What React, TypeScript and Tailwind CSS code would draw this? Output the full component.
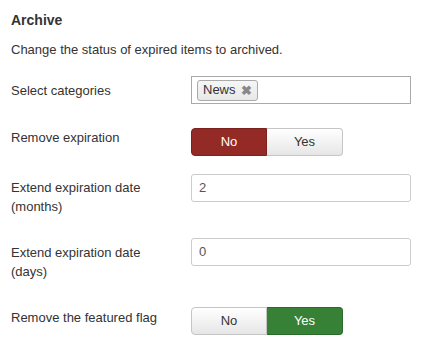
import React from 'react';

const Toggle = ({ value }: { value: 'no' | 'yes' }) => {
  const base = 'w-[76px] h-[28px] flex items-center justify-center text-[13px] border';
  const off = 'bg-gradient-to-b from-white to-[#e6e6e6] text-[#333] border-[#c5c5c5]';
  return (
    <div className="flex">
      <div
        className={`${base} rounded-l-[4px] ${
          value === 'no' ? 'bg-[#942a25] text-white border-[#7a221e]' : off
        }`}
      >
        No
      </div>
      <div
        className={`${base} w-[75px] rounded-r-[4px] border-l-0 ${
          value === 'yes' ? 'bg-[#378137] text-white border-[#2c6a2c]' : off
        }`}
      >
        Yes
      </div>
    </div>
  );
};

const Label = ({ children, pt }: { children: React.ReactNode; pt: string }) => (
  <div className={`w-[180px] shrink-0 text-[13px] leading-[19px] text-[#333] ${pt}`}>{children}</div>
);

export default function App() {
  return (
    <div
      className="w-[437px] h-[356px] bg-white pt-[10px] pl-[11px] text-[#333]"
      style={{ fontFamily: '"Liberation Sans", Arial, sans-serif' }}
    >
      <h3 className="text-[14px] font-bold leading-[20px]">Archive</h3>
      <p className="mt-[11px] text-[13px] leading-[18px]">Change the status of expired items to archived.</p>

      <div className="mt-[17px] flex items-start">
        <Label pt="pt-[5px]">Select categories</Label>
        <div className="w-[220px] h-[28px] border border-[#aaa] bg-white flex items-center pl-[5px]">
          <span className="h-[21px] flex items-center gap-[5px] px-[5px] border border-[#aaa] rounded-[3px] bg-gradient-to-b from-[#f6f6f6] to-[#e8e8e8] text-[13px] text-[#333]">
            News
            <span className="text-[#888] text-[13px] font-bold leading-none">✖</span>
          </span>
        </div>
      </div>

      <div className="mt-[24px] flex items-start">
        <Label pt="pt-0">Remove expiration</Label>
        <Toggle value="no" />
      </div>

      <div className="mt-[18px] flex items-start">
        <Label pt="pt-[4px]">
          Extend expiration date
          <br />
          (months)
        </Label>
        <div className="w-[220px] h-[28px] border border-[#ccc] rounded-[3px] flex items-center pl-[7px] text-[13px] text-[#555]">
          2
        </div>
      </div>

      <div className="mt-[22px] flex items-start">
        <Label pt="pt-[5px]">
          Extend expiration date
          <br />
          (days)
        </Label>
        <div className="w-[220px] h-[28px] border border-[#ccc] rounded-[3px] flex items-center pl-[7px] text-[13px] text-[#555]">
          0
        </div>
      </div>

      <div className="mt-[26px] flex items-start">
        <Label pt="pt-px">Remove the featured flag</Label>
        <Toggle value="yes" />
      </div>
    </div>
  );
}
